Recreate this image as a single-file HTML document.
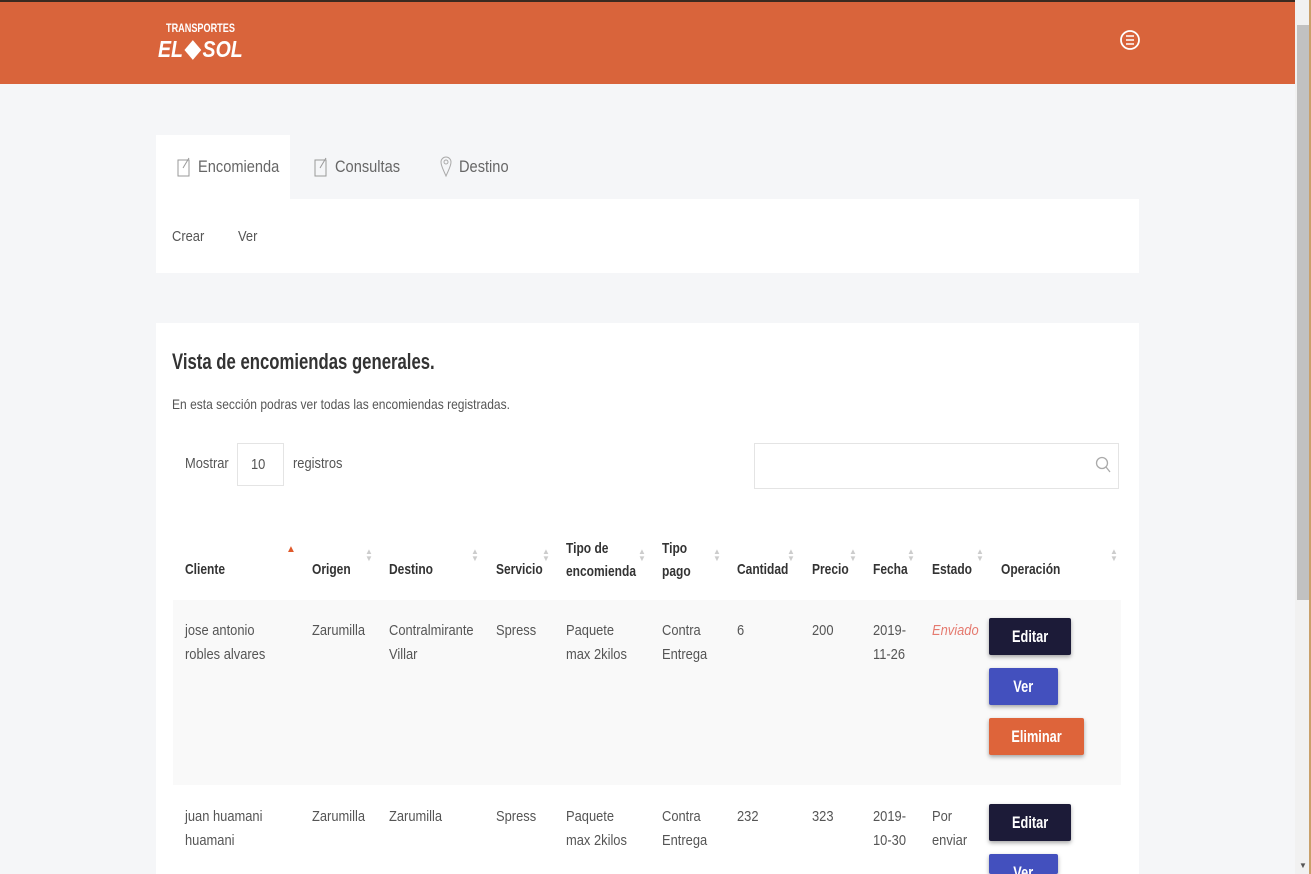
<!DOCTYPE html>
<html style="width:1311px;height:874px;overflow:hidden"><head><meta charset="utf-8"><style>
*{margin:0;padding:0;box-sizing:border-box}
body{width:1311px;height:874px;overflow:hidden;background:#f5f6f8;font-family:"Liberation Sans",sans-serif;color:#555;font-size:15px;position:relative}
.a{position:absolute;white-space:nowrap}
.n{transform:scaleX(.86);transform-origin:0 0}
.b{transform:scaleX(.76);transform-origin:0 0}
.hdr{position:absolute;left:0;top:0;width:1295px;height:84px;background:#d9643b;border-top:2px solid #3a2a20}
.sb{position:absolute;left:1295px;top:0;width:16px;height:874px;background:#f1f1f1;border-right:2px solid #c9a06a}
.th{position:absolute;left:1297px;top:25px;width:12px;height:575px;background:#c1c1c1}
.w{position:absolute;background:#fff}
.h{font-weight:bold;color:#333;font-size:15px;transform:scaleX(.8);transform-origin:0 0}
.btn{position:absolute;color:#fff;font-weight:bold;font-size:17px;text-align:center;border-radius:2px;box-shadow:0 2px 4px rgba(0,0,0,.35)}
.btn span{display:inline-block;transform:scaleX(.75)}
.ar{position:absolute;color:#ccc;font-size:8px;line-height:7px}
</style></head><body>
<div class="hdr"></div>
<div class="a b" style="left:166px;top:21px;color:#fff;font-weight:bold;font-size:12px">TRANSPORTES</div>
<div class="a" style="left:158px;top:36px;color:#fff;font-weight:bold;font-style:italic;font-size:23px;transform:scaleX(.85);transform-origin:0 0">EL<span style="display:inline-block;width:14px;height:14px;background:#fff;transform:rotate(45deg);margin:0 4px 0 5px"></span>SOL</div>
<svg class="a" style="left:1119px;top:28px" width="22" height="24" viewBox="0 0 22 24"><circle cx="11" cy="12" r="9" fill="none" stroke="#fff" stroke-width="1.8"/><path d="M7 8h8M7 12h8M7 16h8" stroke="#fff" stroke-width="1.5"/></svg>
<div class="sb"></div><div class="th"></div>
<div class="a" style="left:1299px;top:861px;font-size:8px;color:#555">▼</div>

<div class="w" style="left:156px;top:135px;width:134px;height:64px"></div>
<div class="w" style="left:156px;top:199px;width:983px;height:74px"></div>
<svg class="a" style="left:177px;top:156px" width="14" height="22"><rect x="1" y="4" width="11" height="16" fill="none" stroke="#999"/><path d="M6 12L12 2" stroke="#999"/></svg>
<div class="a n" style="left:198px;top:157px;font-size:17px;color:#666">Encomienda</div>
<svg class="a" style="left:314px;top:156px" width="14" height="22"><rect x="1" y="4" width="11" height="16" fill="none" stroke="#999"/><path d="M6 12L12 2" stroke="#999"/></svg>
<div class="a n" style="left:335px;top:157px;font-size:17px;color:#666">Consultas</div>
<svg class="a" style="left:440px;top:156px" width="12" height="22"><path d="M6 20C3 13 1 10 1 6a5 5 0 0110 0c0 4-2 7-5 14z" fill="none" stroke="#aaa"/><circle cx="6" cy="6" r="2" fill="none" stroke="#aaa"/></svg>
<div class="a n" style="left:459px;top:157px;font-size:17px;color:#666">Destino</div>
<div class="a n" style="left:172px;top:228px">Crear</div>
<div class="a n" style="left:238px;top:228px">Ver</div>

<div class="w" style="left:156px;top:323px;width:983px;height:551px"></div>
<div class="a b" style="left:172px;top:349px;font-size:22px;color:#333;font-weight:bold">Vista de encomiendas generales.</div>
<div class="a n" style="left:172px;top:396px;font-size:14px">En esta sección podras ver todas las encomiendas registradas.</div>
<div class="a n" style="left:185px;top:455px">Mostrar</div>
<div class="a" style="left:237px;top:443px;width:47px;height:43px;border:1px solid #e4e4e4"></div>
<div class="a n" style="left:251px;top:456px">10</div>
<div class="a n" style="left:293px;top:455px">registros</div>
<div class="a" style="left:754px;top:443px;width:365px;height:46px;border:1px solid #e4e4e4"></div>
<svg class="a" style="left:1095px;top:456px" width="16" height="18"><circle cx="7" cy="7" r="5.5" fill="none" stroke="#aaa" stroke-width="1.3"/><path d="M11 11l4 5" stroke="#aaa" stroke-width="1.3"/></svg>

<div class="a h" style="left:185px;top:561px">Cliente</div>
<div class="a" style="left:286px;top:544px;color:#e05a2b;font-size:10px">▲</div>
<div class="a h" style="left:312px;top:561px">Origen</div>
<div class="a h" style="left:389px;top:561px">Destino</div>
<div class="a h" style="left:496px;top:561px">Servicio</div>
<div class="a h" style="left:566px;top:537px;line-height:23px">Tipo de<br>encomienda</div>
<div class="a h" style="left:662px;top:537px;line-height:23px">Tipo<br>pago</div>
<div class="a h" style="left:737px;top:561px">Cantidad</div>
<div class="a h" style="left:812px;top:561px">Precio</div>
<div class="a h" style="left:873px;top:561px">Fecha</div>
<div class="a h" style="left:932px;top:561px">Estado</div>
<div class="a h" style="left:1001px;top:561px">Operación</div>
<div class="ar" style="left:365px;top:548px">▲<br>▼</div>
<div class="ar" style="left:471px;top:548px">▲<br>▼</div>
<div class="ar" style="left:542px;top:548px">▲<br>▼</div>
<div class="ar" style="left:638px;top:548px">▲<br>▼</div>
<div class="ar" style="left:713px;top:548px">▲<br>▼</div>
<div class="ar" style="left:787px;top:548px">▲<br>▼</div>
<div class="ar" style="left:849px;top:548px">▲<br>▼</div>
<div class="ar" style="left:907px;top:548px">▲<br>▼</div>
<div class="ar" style="left:976px;top:548px">▲<br>▼</div>
<div class="ar" style="left:1110px;top:548px">▲<br>▼</div>

<div class="a" style="left:173px;top:600px;width:948px;height:185px;background:#f9f9f9"></div>
<div class="a n" style="left:185px;top:619px;line-height:24px">jose antonio<br>robles alvares</div>
<div class="a n" style="left:312px;top:619px;line-height:24px">Zarumilla</div>
<div class="a n" style="left:389px;top:619px;line-height:24px">Contralmirante<br>Villar</div>
<div class="a n" style="left:496px;top:619px;line-height:24px">Spress</div>
<div class="a n" style="left:566px;top:619px;line-height:24px">Paquete<br>max 2kilos</div>
<div class="a n" style="left:662px;top:619px;line-height:24px">Contra<br>Entrega</div>
<div class="a n" style="left:737px;top:619px;line-height:24px">6</div>
<div class="a n" style="left:812px;top:619px;line-height:24px">200</div>
<div class="a n" style="left:873px;top:619px;line-height:24px">2019-<br>11-26</div>
<div class="a n" style="left:932px;top:619px;line-height:24px;color:#e57a6f;font-style:italic">Enviado</div>
<div class="btn" style="left:989px;top:618px;width:82px;height:37px;line-height:37px;background:#1c1b38"><span>Editar</span></div>
<div class="btn" style="left:989px;top:668px;width:69px;height:37px;line-height:37px;background:#4350be"><span>Ver</span></div>
<div class="btn" style="left:989px;top:718px;width:95px;height:37px;line-height:37px;background:#de643a"><span>Eliminar</span></div>

<div class="a n" style="left:185px;top:805px;line-height:24px">juan huamani<br>huamani</div>
<div class="a n" style="left:312px;top:805px;line-height:24px">Zarumilla</div>
<div class="a n" style="left:389px;top:805px;line-height:24px">Zarumilla</div>
<div class="a n" style="left:496px;top:805px;line-height:24px">Spress</div>
<div class="a n" style="left:566px;top:805px;line-height:24px">Paquete<br>max 2kilos</div>
<div class="a n" style="left:662px;top:805px;line-height:24px">Contra<br>Entrega</div>
<div class="a n" style="left:737px;top:805px;line-height:24px">232</div>
<div class="a n" style="left:812px;top:805px;line-height:24px">323</div>
<div class="a n" style="left:873px;top:805px;line-height:24px">2019-<br>10-30</div>
<div class="a n" style="left:932px;top:805px;line-height:24px">Por<br>enviar</div>
<div class="btn" style="left:989px;top:804px;width:82px;height:37px;line-height:37px;background:#1c1b38"><span>Editar</span></div>
<div class="btn" style="left:989px;top:854px;width:69px;height:20px;line-height:37px;background:#4350be;overflow:hidden"><span>Ver</span></div>
</body></html>
